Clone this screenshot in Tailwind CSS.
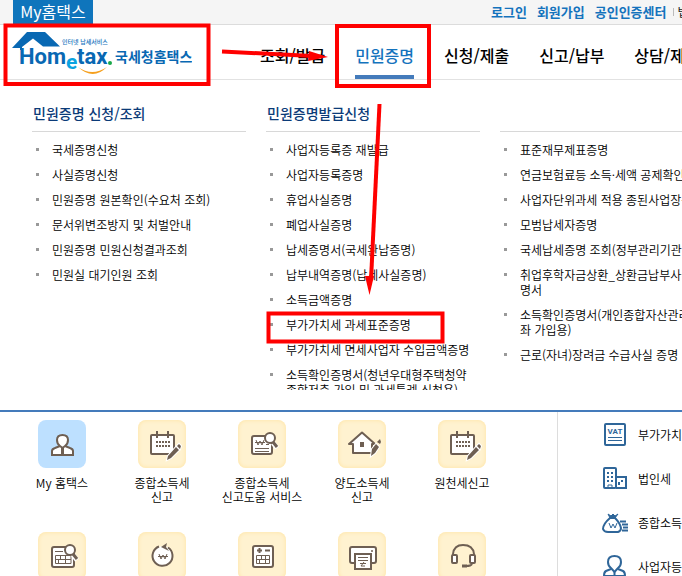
<!DOCTYPE html>
<html lang="ko">
<head>
<meta charset="utf-8">
<meta name="viewport" content="width=device-width, initial-scale=1">
<title>국세청 홈택스</title>
<script src="https://cdn.jsdelivr.net/npm/@tailwindcss/browser@4"></script>
</head>
<body class="relative h-screen overflow-hidden bg-white font-['Noto_Sans_CJK_KR',sans-serif] text-xs font-[350] text-black">

<!-- Utility bar -->
<div class="flex h-[25px] items-end overflow-hidden border-b border-[#dcdcdc] bg-[#f5f5f5] pl-[13px]">
  <a href="#" class="h-6 w-20 shrink-0 bg-[#0f75bc] text-center text-base leading-[22px] font-normal text-white">My홈택스</a>
  <nav aria-label="회원" class="ml-[398px] flex h-6 shrink-0 items-center whitespace-nowrap text-[13px] leading-6 font-bold text-[#1473bd]">
    <a href="#" class="mr-2.5">로그인</a>
    <a href="#" class="mr-2.5">회원가입</a>
    <a href="#" class="mr-1.5">공인인증센터</a>
    <span class="mr-1 h-2 w-px bg-[#bbb]"></span>
    <a href="#" class="text-xs leading-6 font-normal text-[#222]">법령정보</a>
  </nav>
</div>

<!-- Logo and main menu -->
<header class="flex h-[55px] overflow-hidden border-b border-[#e2e2e2] pl-3">
  <a href="#" class="mr-[68px] shrink-0">
    <svg class="h-[54px] w-[180px]" viewBox="12 25 180 54" role="img" aria-label="국세청홈택스">
      <path d="M12 48 L27 32 H45 L60 46.500 H43 L33 38.500 L22 47 V50 H20 V48 Z" fill="#0868b3"/>
      <text x="62" y="44" font-family="Noto Sans CJK KR" font-size="6" font-weight="500" fill="#1473bd">인터넷 납세서비스</text>
      <g font-family="Roboto" font-weight="700" font-size="22" fill="#0868b3">
        <text x="19" y="64">Hom</text>
        <text x="66" y="69" font-size="21" fill="#0ba3e0">e</text>
        <text x="77" y="64">tax</text>
      </g>
      <circle cx="110" cy="63" r="2" fill="#19a84a"/>
      <path d="M78 67 Q92 77 107 67 Q93 81 78 67Z" fill="#f5a01f"/>
      <text x="115" y="62" font-family="Noto Sans CJK KR" font-size="14" font-weight="700" fill="#0868b3">국세청홈택스</text>
    </svg>
  </a>
  <nav aria-label="주 메뉴" class="flex shrink-0 gap-[30px] whitespace-nowrap text-base leading-[60px] font-medium">
    <a href="#">조회/발급</a>
    <a href="#" aria-current="page" class="h-[54px] border-b-4 border-[#447bbb] text-[#1473bd]">민원증명</a>
    <a href="#">신청/제출</a>
    <a href="#">신고/납부</a>
    <a href="#">상담/제보</a>
  </nav>
</header>

<!-- Open submenu -->
<section class="h-[310px] overflow-hidden pl-8">
  <div class="flex gap-5 whitespace-nowrap leading-[15px] [&>div]:w-[214px] [&>div]:shrink-0 [&_h2]:h-[52px] [&_h2]:border-b [&_h2]:border-[#d8d8d8] [&_h2]:pl-px [&_h2]:text-sm [&_h2]:leading-[66px] [&_h2]:font-medium [&_h2]:text-[#0b3b78] [&_ul]:flex [&_ul]:flex-col [&_ul]:gap-2.5 [&_ul]:pt-2.5 [&_li]:relative [&_li]:pl-5 [&_li]:before:absolute [&_li]:before:top-1.5 [&_li]:before:left-1 [&_li]:before:size-[3px] [&_li]:before:bg-[#999]">
    <div>
      <h2>민원증명 신청/조회</h2>
      <ul>
        <li><a href="#">국세증명신청</a></li>
        <li><a href="#">사실증명신청</a></li>
        <li><a href="#">민원증명 원본확인(수요처 조회)</a></li>
        <li><a href="#">문서위변조방지 및 처벌안내</a></li>
        <li><a href="#">민원증명 민원신청결과조회</a></li>
        <li><a href="#">민원실 대기인원 조회</a></li>
      </ul>
    </div>
    <div>
      <h2>민원증명발급신청</h2>
      <ul>
        <li><a href="#">사업자등록증 재발급</a></li>
        <li><a href="#">사업자등록증명</a></li>
        <li><a href="#">휴업사실증명</a></li>
        <li><a href="#">폐업사실증명</a></li>
        <li><a href="#">납세증명서(국세완납증명)</a></li>
        <li><a href="#">납부내역증명(납세사실증명)</a></li>
        <li><a href="#">소득금액증명</a></li>
        <li><a href="#">부가가치세 과세표준증명</a></li>
        <li><a href="#">부가가치세 면세사업자 수입금액증명</a></li>
        <li><a href="#">소득확인증명서(청년우대형주택청약<br>종합저축 가입 및 과세특례 신청용)</a></li>
      </ul>
    </div>
    <div>
      <h2 aria-hidden="true"></h2>
      <ul>
        <li><a href="#">표준재무제표증명</a></li>
        <li><a href="#">연금보험료등 소득·세액 공제확인서</a></li>
        <li><a href="#">사업자단위과세 적용 종된사업장증명</a></li>
        <li><a href="#">모범납세자증명</a></li>
        <li><a href="#">국세납세증명 조회(정부관리기관용)</a></li>
        <li><a href="#">취업후학자금상환_상환금납부사실증<br>명서</a></li>
        <li><a href="#">소득확인증명서(개인종합자산관리계<br>좌 가입용)</a></li>
        <li><a href="#">근로(자녀)장려금 수급사실 증명</a></li>
      </ul>
    </div>
  </div>
</section>

<svg class="hidden" aria-hidden="true">
  <defs>
    <g id="pencil">
      <path d="M19 31 L20 27 L28 18 L31 21 L23 29 Z M29 17 L31 15 L33 17 L32 20 Z" fill="#6e5f53" stroke="#fff" stroke-width="2" paint-order="stroke"/>
    </g>
    <g id="calendar">
      <rect x="3" y="6" width="23" height="19" rx="1" fill="#fff" stroke="#6e5f53" stroke-width="2"/>
      <path d="M9 2 V9 M20 2 V9" stroke="#6e5f53" stroke-width="2"/>
      <path d="M8 13 H22 M8 17 H22" stroke="#6e5f53" stroke-width="2" stroke-dasharray="2 1"/>
      <use href="#pencil"/>
    </g>
    <g id="lens">
      <path d="M26 13 L30 18" stroke="#fff" stroke-width="5"/>
      <circle cx="23" cy="8" r="5" fill="#fff" stroke="#6e5f53" stroke-width="2"/>
      <path d="M26 12 L30 17" stroke="#6e5f53" stroke-width="3"/>
    </g>
  </defs>
</svg>

<!-- Shortcuts -->
<main class="mt-5 flex h-[166px] overflow-hidden border-t-2 border-[#447bbb] text-center leading-[14px]">
  <div class="grid w-[558px] shrink-0 grid-cols-[repeat(5,100px)] grid-rows-[112px_112px] border-r border-[#ddd] pt-2 pl-3 whitespace-nowrap [&_a]:flex [&_a]:flex-col [&_a]:items-center [&_a]:gap-2 [&_svg]:size-12 [&_svg]:rounded-lg [&_svg]:bg-[#fff2d0] [&_svg]:shadow-[inset_0_0_4px_#ffe3a0]">
    <a href="#">
      <svg class="bg-[#bde0ff]! shadow-none!" viewBox="0 0 48 48" fill="#fff" stroke="#6e5f53" stroke-width="2">
        <path d="M14 35 V31 Q14 29 17 28 L22 26 H27 L32 28 Q35 29 35 31 V35 Z"/>
        <path d="M19 20 Q19 15 24.500 15 Q30 15 30 20 Q30 24 27 26 L24.500 28 L22 26 Q19 24 19 20Z"/>
        <path d="M24.500 28 V34" stroke-width="3"/>
      </svg>
      <span>My 홈택스</span>
    </a>
    <a href="#">
      <svg viewBox="0 0 48 48" fill="none"><use href="#calendar" x="10" y="9"/></svg>
      <span>종합소득세<br>신고</span>
    </a>
    <a href="#">
      <svg viewBox="0 0 48 48" fill="none">
        <rect x="14" y="16" width="20" height="18" rx="2" fill="#fff" stroke="#6e5f53" stroke-width="2"/>
        <path d="M18 20 L20 25 L22 21 L24 25 L26 20 M17 22.500 H27" stroke="#6e5f53"/>
        <path d="M17 28.500 H31 M17 31.500 H31 M28 24.500 H31" stroke="#6e5f53"/>
        <use href="#lens" x="9" y="10"/>
      </svg>
      <span>종합소득세<br>신고도움 서비스</span>
    </a>
    <a href="#">
      <svg viewBox="0 0 48 48" fill="none">
        <path d="M15 33 V24 H11 L24 12.500 L37 24 H34 V33 Z" fill="#fff" stroke="#6e5f53" stroke-width="2" stroke-linejoin="round"/>
        <rect x="22" y="22" width="4" height="5" fill="#6e5f53"/>
        <path d="M33 36 L34 29 L38 24 L41 27 L37 33 Z" fill="#6e5f53" stroke="#fff" paint-order="stroke" stroke-width="2"/>
        <path d="M39 22 L42 19 L43 22 L42 24 Z" fill="#6e5f53"/>
      </svg>
      <span>양도소득세<br>신고</span>
    </a>
    <a href="#">
      <svg viewBox="0 0 48 48" fill="none"><use href="#calendar" x="10" y="9"/></svg>
      <span>원천세신고</span>
    </a>
    <a href="#" aria-label="세금 계산 조회">
      <svg viewBox="0 0 48 48" fill="none">
        <rect x="14" y="15" width="22" height="20" rx="2" fill="#fff" stroke="#6e5f53" stroke-width="2"/>
        <path d="M17 19.500 H25 M17.500 23.500 H33 V31.500 H17.500 Z M17 27.500 H33 M22.500 24 V27 M20.500 28 V31 M27.500 24 V31" stroke="#6e5f53"/>
        <use href="#lens" x="9" y="10"/>
      </svg>
    </a>
    <a href="#" aria-label="환급금 조회">
      <svg viewBox="0 0 48 48" fill="none">
        <circle cx="25" cy="24" r="10" fill="#fff"/>
        <path d="M30 15.500 A10 10 0 1 1 21 14.500" stroke="#6e5f53" stroke-width="2"/>
        <path d="M23 15 L29 11 L28 15 L31 19 Z" fill="#6e5f53"/>
        <path d="M21 22 L23 27 L25 23 L27 27 L29 22 M20 24.500 H30" stroke="#6e5f53"/>
      </svg>
    </a>
    <a href="#" aria-label="세금 모의계산">
      <svg viewBox="0 0 48 48" fill="none">
        <rect x="15" y="14" width="20" height="21" rx="2" fill="#fff" stroke="#6e5f53" stroke-width="2"/>
        <path d="M19 18.500 H24 M21.500 16 V21 M27 18.500 H32" stroke="#6e5f53" stroke-width="2"/>
        <path d="M18.500 23.500 H31.500 V31.500 H18.500 Z M18 27.500 H32 M23.500 24 V27 M21.500 28 V31 M27.500 24 V31" stroke="#6e5f53"/>
      </svg>
    </a>
    <a href="#" aria-label="증명서 출력">
      <svg viewBox="0 0 48 48" fill="none">
        <rect x="12" y="15" width="26" height="16" rx="2" fill="#fff" stroke="#6e5f53" stroke-width="2"/>
        <circle cx="34" cy="19" r="1" fill="#6e5f53"/>
        <rect x="17" y="22" width="16" height="15" fill="#fff" stroke="#6e5f53" stroke-width="2"/>
        <path d="M20 25.500 H30 M20 28.500 H30 M22 31.500 H28 M26 30 L23 34 H27" stroke="#6e5f53"/>
      </svg>
    </a>
    <a href="#" aria-label="상담센터">
      <svg viewBox="0 0 48 48" fill="none" stroke="#6e5f53" stroke-width="2">
        <path d="M15 25 V22 Q16 13 25 13 Q35 13 36 22 V25"/>
        <rect x="14" y="23" width="5" height="8" rx="1" fill="#fff"/>
        <rect x="32" y="23" width="5" height="8" rx="1" fill="#fff"/>
        <path d="M34 32 Q33 34 28 34"/><path d="M24 34 H29" stroke-width="3"/>
      </svg>
    </a>
  </div>

  <ul class="flex shrink-0 flex-col pt-px pl-11 text-left whitespace-nowrap [&_a]:flex [&_a]:h-11 [&_a]:items-center [&_a]:gap-2 [&_svg]:size-7">
    <li><a href="#">
      <svg viewBox="0 0 28 28" fill="none" stroke="#2f6699">
        <rect x="3" y="3" width="20" height="21" rx="1" stroke-width="2"/>
        <text x="13" y="13" text-anchor="middle" font-family="Roboto" font-size="8" font-weight="700" fill="#2f6699" stroke="none">VAT</text>
        <path d="M6 16.500 H20 M6 19.500 H20"/>
      </svg>부가가치세</a></li>
    <li><a href="#">
      <svg viewBox="0 0 28 28" fill="none" stroke="#2f6699" stroke-width="2">
        <rect x="2" y="3" width="12" height="20" rx="1"/>
        <path d="M14 12 H24 V23 H14"/>
        <path d="M6 7 V17 M10 7 V17" stroke-dasharray="2 2"/>
        <path d="M6 23 V20 H10 V23" stroke-width="1"/>
        <path d="M17 20 V17 M20 17 V15" stroke-width="2"/>
      </svg>법인세</a></li>
    <li><a href="#">
      <svg viewBox="0 0 28 28" fill="none" stroke="#2f6699" stroke-width="2">
        <path d="M8 9 Q1 15 1 20 Q2 23 6 23 H16 Q19 22 19 19 Q18 14 13 9 Z"/>
        <path d="M6 5 L9 7 L11 5 L13 7 L16 5 L13 9 H8 Z" fill="#2f6699" stroke-width="1"/>
        <path d="M7 14 L9 19 L11 15 L13 19 L15 14" stroke-width="1"/>
        <path d="M18 12.500 H24 M20 15.500 H26 M21 18.500 H26 M20 21.500 H26" stroke-width="2"/>
      </svg>종합소득세</a></li>
    <li><a href="#">
      <svg viewBox="0 0 28 28" fill="none" stroke="#2f6699" stroke-width="2">
        <path d="M6 9 Q6 3 12.500 3 Q19 3 19 9 Q19 13 16 15 L12.500 19 L9 15 Q6 13 6 9Z"/>
        <path d="M9 16 L4 18 Q2 19 2 23 H23 Q23 19 21 18 L16 16 M12.500 18 V23"/>
      </svg>사업자등록</a></li>
  </ul>
</main>

<!-- Guide marks drawn over the page -->
<svg class="pointer-events-none absolute top-0 left-0 h-[400px] w-[682px]" viewBox="0 0 682 400" fill="none" stroke="#f00" stroke-width="4" aria-hidden="true">
  <rect x="5.500" y="25.500" width="203" height="58.500"/>
  <rect x="337" y="26" width="92" height="60"/>
  <rect x="268.500" y="313.500" width="174" height="28"/>
  <path d="M222 51.500 L312 56"/>
  <path d="M309 51 L328 57 L308 61 Z" fill="#f00" stroke="none"/>
  <path d="M379.500 104 L371 280"/>
  <path d="M365 276 L374 276 L369.500 295 Z" fill="#f00" stroke="none"/>
</svg>
</body>
</html>
